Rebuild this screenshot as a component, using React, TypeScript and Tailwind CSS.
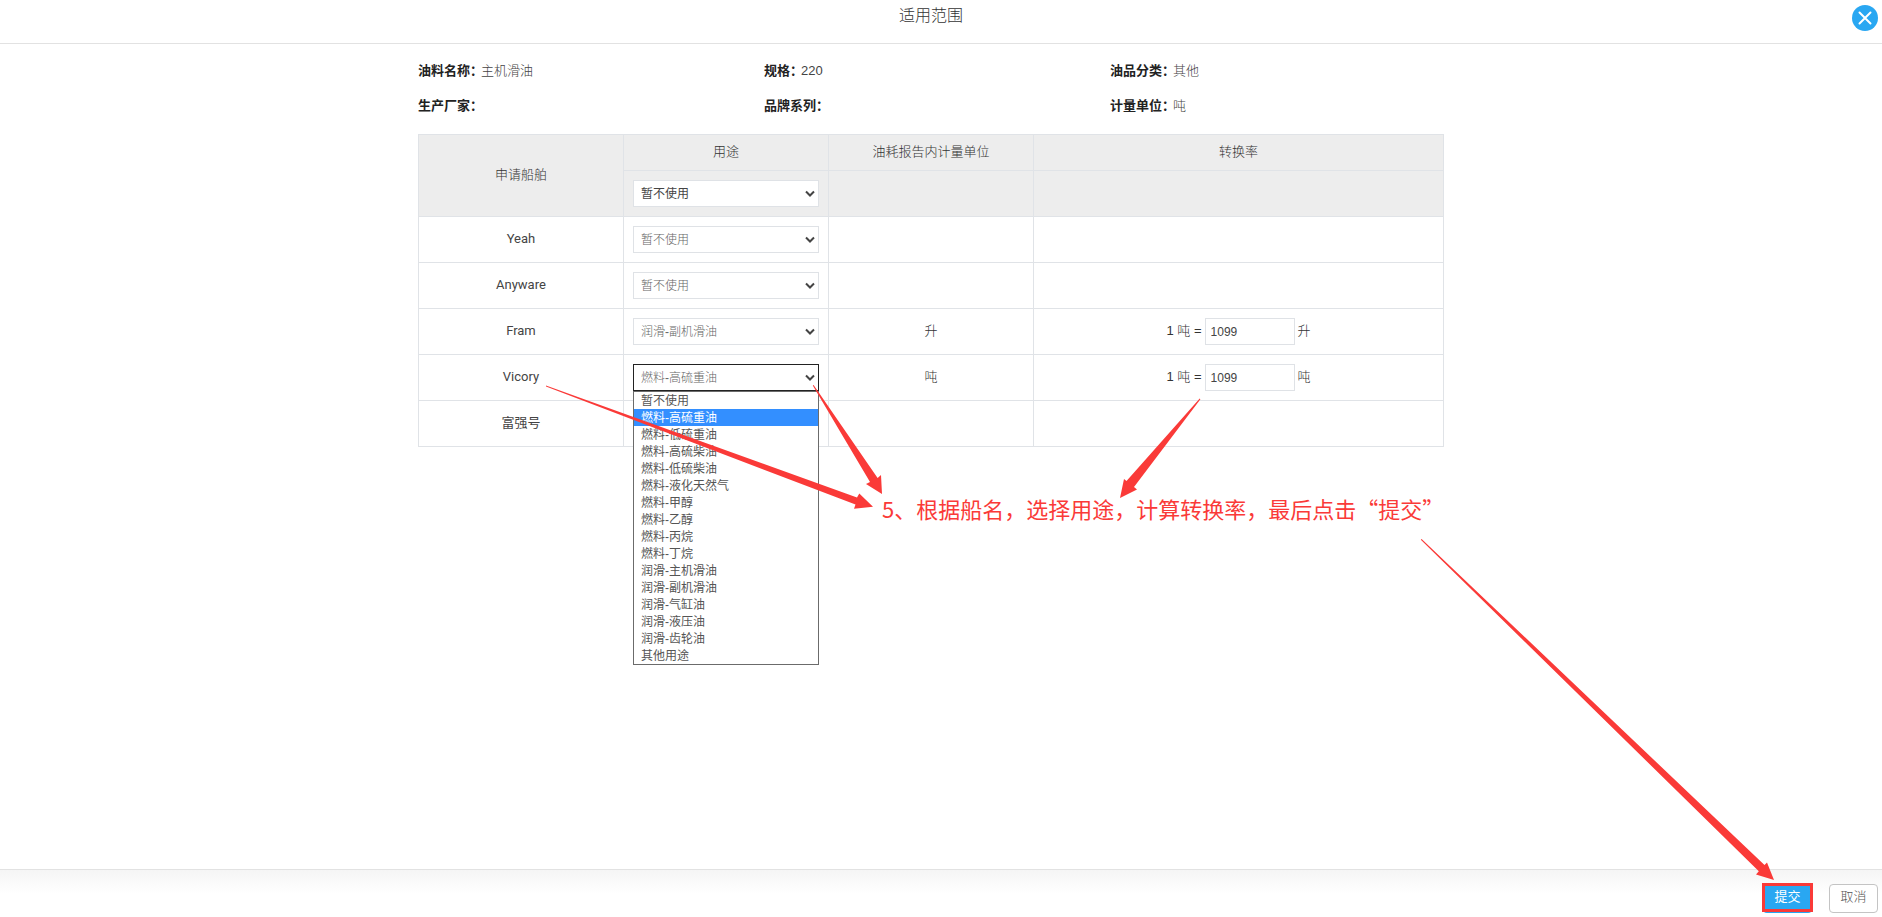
import { useState } from "react";

const USES = [
  "暂不使用",
  "燃料-高硫重油",
  "燃料-低硫重油",
  "燃料-高硫柴油",
  "燃料-低硫柴油",
  "燃料-液化天然气",
  "燃料-甲醇",
  "燃料-乙醇",
  "燃料-丙烷",
  "燃料-丁烷",
  "润滑-主机滑油",
  "润滑-副机滑油",
  "润滑-气缸油",
  "润滑-液压油",
  "润滑-齿轮油",
  "其他用途",
];

const INFO = [
  { label: "油料名称", value: "主机滑油" },
  { label: "规格", value: "220" },
  { label: "油品分类", value: "其他" },
  { label: "生产厂家", value: "" },
  { label: "品牌系列", value: "" },
  { label: "计量单位", value: "吨" },
];

type Ship = { name: string; use: string; unit?: string; rate?: string; open?: boolean };

const SHIPS: Ship[] = [
  { name: "Yeah", use: "暂不使用" },
  { name: "Anyware", use: "暂不使用" },
  { name: "Fram", use: "润滑-副机滑油", unit: "升", rate: "1099" },
  { name: "Vicory", use: "燃料-高硫重油", unit: "吨", rate: "1099", open: true },
  { name: "富强号", use: "暂不使用" },
];

function UseSelect({ label, initial, header, open }: { label: string; initial: string; header?: boolean; open?: boolean }) {
  const [value, setValue] = useState(initial);
  return (
    <div className="relative">
      <select
        aria-label={label}
        value={value}
        onChange={(e) => setValue(e.target.value)}
        className={`block h-[27px] w-full appearance-none border bg-white pr-6 pl-[7px] text-xs outline-none ${
          open ? "border-[#222]" : "border-[#dfe2e6]"
        } ${header ? "font-normal text-[#444]" : "text-[#666]"}`}
      >
        {USES.map((u) => (
          <option key={u}>{u}</option>
        ))}
      </select>
      <svg className="pointer-events-none absolute top-2.5 right-1 h-2 w-2.5" viewBox="0 0 10 8" fill="none" stroke="#444" strokeWidth="2">
        <path d="M1 1.5 5 5.5 9 1.5" />
      </svg>
      {open && (
        <ul role="listbox" aria-label={label} className="absolute top-full right-0 left-0 z-10 border border-[#6b6b6b] bg-white text-left font-normal">
          {USES.map((u) => (
            <li
              key={u}
              role="option"
              aria-selected={u === value}
              onClick={() => setValue(u)}
              className={`h-[17px] pl-[7px] text-xs leading-[19px] ${u === value ? "bg-[#338fff] text-white" : "text-[#555]"}`}
            >
              {u}
            </li>
          ))}
        </ul>
      )}
    </div>
  );
}

export default function App() {
  return (
    <div className="relative flex min-h-screen flex-col bg-white font-['Liberation_Sans','Noto_Sans_CJK_SC',sans-serif] text-[13px] font-light text-[#333]">
      <header className="relative h-11 border-b border-[#e2e2e2] pr-5 text-center">
        <h1 className="pt-1 text-base leading-6">适用范围</h1>
        <button aria-label="关闭" className="absolute top-[5px] right-1 flex size-[26px] items-center justify-center rounded-full bg-[#29a7f2]">
          <svg className="size-3.5" viewBox="0 0 14 14" stroke="#fff" strokeWidth="2" strokeLinecap="round">
            <path d="M1.5 1.5 12.5 12.5M12.5 1.5 1.5 12.5" />
          </svg>
        </button>
      </header>

      <main className="flex-1 pr-5">
        <div className="mx-auto w-[calc(55%+2px)]">
          <dl className="-mr-3 grid grid-cols-3 pt-[9px] pb-[11px]">
            {INFO.map((f) => (
              <div key={f.label} className="flex h-[35px] items-center">
                <dt className="-mr-0.5 font-bold text-[#222]">{f.label}：</dt>
                <dd className="text-[#444]">{f.value}</dd>
              </div>
            ))}
          </dl>

          <table className="w-full table-fixed border-collapse text-center [&_td]:border [&_td]:border-[#e0e3e7] [&_th]:border [&_th]:border-[#e0e3e7] [&_th]:font-light">
            <colgroup>
              <col className="w-1/5" />
              <col className="w-1/5" />
              <col className="w-1/5" />
              <col className="w-2/5" />
            </colgroup>
            <thead className="bg-[#ededed]">
              <tr className="h-9">
                <th rowSpan={2} className="pb-0.5">申请船舶</th>
                <th className="pb-0.5">用途</th>
                <th className="pb-0.5">油耗报告内计量单位</th>
                <th className="pb-0.5">转换率</th>
              </tr>
              <tr className="h-[46px]">
                <th className="px-[9px]">
                  <UseSelect label="全部船舶用途" initial="暂不使用" header />
                </th>
                <th />
                <th />
              </tr>
            </thead>
            <tbody>
              {SHIPS.map((s) => (
                <tr key={s.name} className="h-[46px]">
                  <td className="pb-0.5 font-['Roboto','Noto_Sans_CJK_SC',sans-serif] font-normal text-[#444]">{s.name}</td>
                  <td className="px-[9px]">
                    <UseSelect label={`${s.name} 用途`} initial={s.use} open={s.open} />
                  </td>
                  <td className="pb-0.5">{s.unit}</td>
                  <td>
                    {s.rate && (
                      <label className="flex items-center justify-center gap-[3px]">
                        <span className="pb-0.5">1 吨 =</span>
                        <input defaultValue={s.rate} className="h-[27px] w-[90px] border border-[#dfe2e6] px-[5px] text-xs text-[#444] outline-none" />
                        <span className="pb-0.5">{s.unit}</span>
                      </label>
                    )}
                  </td>
                </tr>
              ))}
            </tbody>
          </table>
        </div>
      </main>

      <footer className="flex h-12 items-start justify-end gap-[17px] border-t border-[#e2e2e2] bg-linear-to-b from-[#f5f5f5] to-white to-50% pt-3.5 pr-1">
        <div className="relative">
          <button className="h-[29px] w-[49px] rounded bg-[#29a7f2] pb-1 text-[13px] font-normal text-white">提交</button>
          <span className="pointer-events-none absolute -top-px -right-px -left-px bottom-px border-3 border-[#fa3a38]" />
        </div>
        <button className="h-[29px] w-[49px] rounded border border-[#c4c4c4] bg-white pb-1 text-[13px] text-[#555]">取消</button>
      </footer>

      <svg className="pointer-events-none absolute top-0 left-0 z-20 h-[917px] w-[1882px]" viewBox="0 0 1882 917" fill="#fa3a38" aria-hidden="true">
        <path d="M546 385.6 857 497.4 859.3 493.5 873 506.8 854 508.8 855.5 504.6 546 386.6Z" />
        <path d="M813.6 385 877.6 478 881 475 882 494 866 484 870 482 812.8 385.6Z" />
        <path d="M1199.7 398.6 1126.5 481 1124 479 1120 498 1137 489.5 1134 487 1200.4 399.2Z" />
        <path d="M1421.6 539 1764.5 865 1767 862.5 1774 880 1756 874.5 1758.8 871.2 1420.8 539.8Z" />
      </svg>
      <p className="pointer-events-none absolute top-[492px] left-[882px] z-20 font-['Noto_Sans_CJK_SC',sans-serif] text-[22px] leading-8 font-normal whitespace-nowrap text-[#fa3a38]">
        5、根据船名，选择用途，计算转换率，最后点击“提交”
      </p>
    </div>
  );
}
